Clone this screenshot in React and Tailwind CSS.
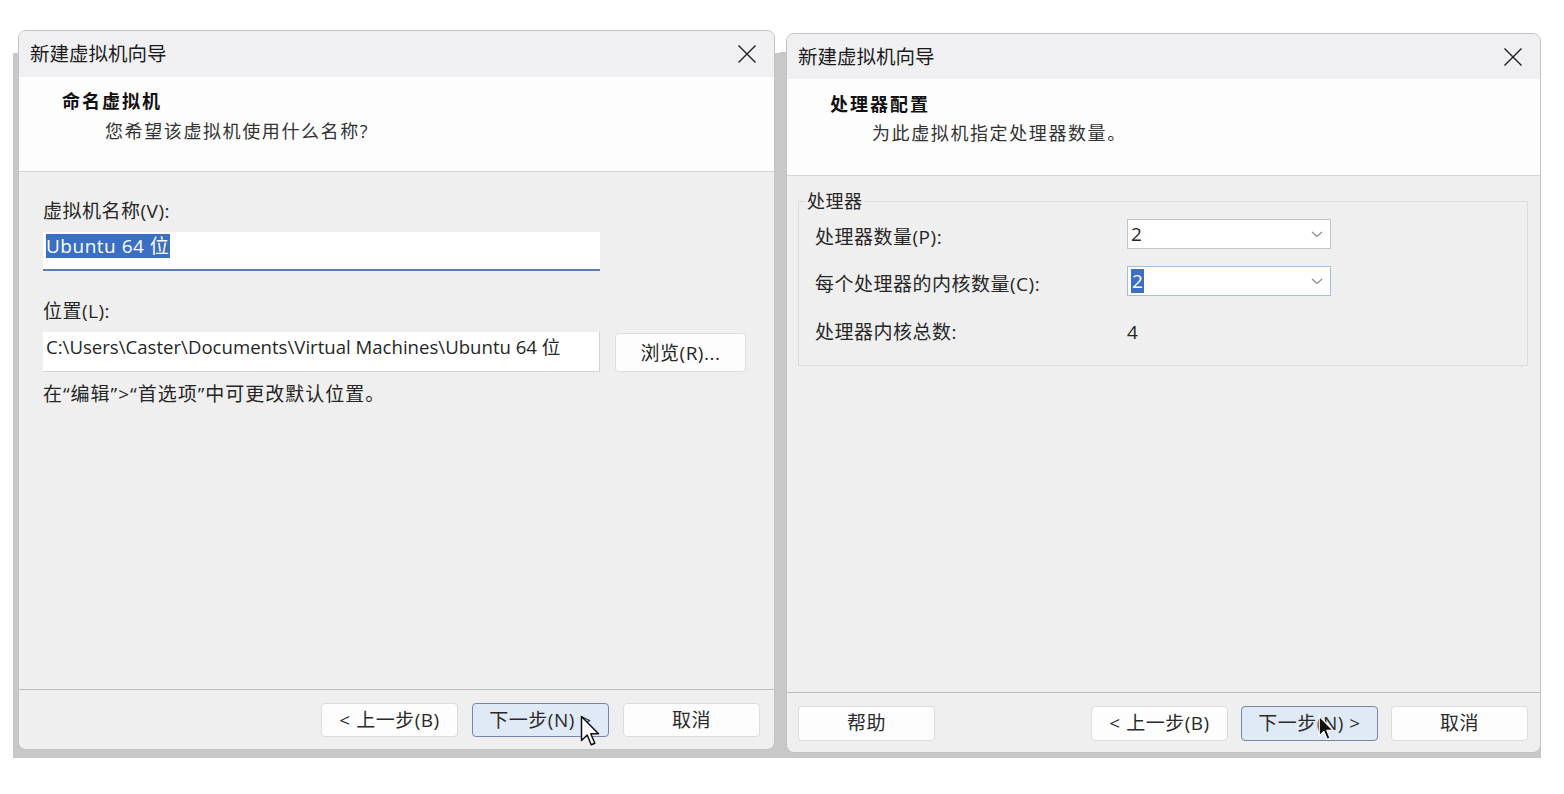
import React from "react";

const CloseIcon = () => (
  <svg width="20" height="20" viewBox="0 0 20 20" className="text-[#1f1f1f]">
    <path d="M1.5 1.5L18.5 18.5M18.5 1.5L1.5 18.5" stroke="currentColor" strokeWidth="1.4" fill="none" />
  </svg>
);

const Chevron = () => (
  <svg width="12" height="7" viewBox="0 0 12 7">
    <path d="M1 1l5 4.5L11 1" stroke="#8c8c8c" strokeWidth="1.2" fill="none" />
  </svg>
);

const Cursor = ({ dark }) => (
  <svg width={dark ? 18 : 22} height={dark ? 29 : 33} viewBox="0 0 22 33">
    <path
      d="M1.5 1.5V25.5L7.2 20L11.2 29.8L14.8 28.3L10.8 18.8H18.5Z"
      fill={dark ? "#111" : "#fff"}
      stroke={dark ? "#fff" : "#111"}
      strokeWidth="1.5"
      strokeLinejoin="round"
    />
  </svg>
);

const Btn = ({ children, next, cursor, dark, tall }) => (
  <button
    className={`relative w-[137px] ${tall ? "h-[35px]" : "h-[34px]"} rounded-[4px] border text-[19px] tracking-[0.5px] text-[#2a2a2a] flex items-center justify-center ${
      next ? "bg-[#e0eaf6] border-[#7489aa]" : "bg-[#fdfdfd] border-[#dddddd]"
    }`}
  >
    {children}
    {cursor && (
      <span className={`absolute ${dark ? "left-[76px] top-[7px]" : "left-[107px] top-[11px]"}`}>
        <Cursor dark={dark} />
      </span>
    )}
  </button>
);

const Wizard = ({ wide, heading, sub, children, footer, right }) => (
  <div
    className={`${wide ? "w-[757px]" : "w-[755px]"} h-[720px] flex flex-col rounded-[8px] border border-[#c3c3c3] bg-[#efefef] overflow-hidden`}
  >
    <div
      className={`${right ? "h-[45px]" : "h-[46px]"} shrink-0 flex items-center justify-between pl-[11px] pr-[17px] bg-[#f0f0f2]`}
    >
      <span className="text-[19.5px] text-[#1c1c1c]">新建虚拟机向导</span>
      <CloseIcon />
    </div>
    <div
      className={`${right ? "h-[97px] pt-[13px]" : "h-[95px] pt-[12px]"} shrink-0 bg-[#fdfdfd] border-b border-[#d4d4d4] pl-[43px]`}
    >
      <div className="text-[18px] leading-[24px] font-bold tracking-[2px] text-[#111]">{heading}</div>
      <div className={`${right ? "mt-[5px] ml-[42px]" : "mt-[6px] ml-[43px]"} text-[18px] leading-[24px] tracking-[1.6px] text-[#333]`}>
        {sub}
      </div>
    </div>
    <div className="flex-1">{children}</div>
    <div className="h-[60px] shrink-0 border-t border-[#bdbdbd] pt-[13px]">{footer}</div>
  </div>
);

const NamePage = () => (
  <div className="pl-[24px] pt-[27px] text-[19px] leading-[24px] tracking-[0.5px] text-[#262626]">
    <div>虚拟机名称(V):</div>
    <div className="mt-[9px] w-[557px] h-[39px] bg-white border-b-2 border-[#5b7db0] pl-[3px] pt-[2px]">
      <span className="inline-block bg-[#3a6fc4] text-white leading-[24px] pr-[1px]">Ubuntu 64 位</span>
    </div>
    <div className="mt-[28px]">位置(L):</div>
    <div className="mt-[9px] flex items-start gap-[15px]">
      <div className="w-[557px] h-[40px] bg-white border-b border-r border-[#d4d4d4] pl-[3px] pt-[3px] text-[18.6px] tracking-normal whitespace-nowrap overflow-hidden">
        C:\Users\Caster\Documents\Virtual Machines\Ubuntu 64 位
      </div>
      <button className="mt-[1px] w-[131px] h-[39px] rounded-[4px] border border-[#dedede] bg-[#fdfdfd] flex items-center justify-center">
        浏览(R)...
      </button>
    </div>
    <div className="mt-[10px] tracking-[1px]">在“编辑”&gt;“首选项”中可更改默认位置。</div>
  </div>
);

const Select = ({ focused, value }) => (
  <div
    className={`w-[204px] h-[30px] bg-white border flex items-center justify-between pl-[3px] pr-[7px] ${
      focused ? "border-[#9ec0e6]" : "border-[#c4c4c4]"
    }`}
  >
    {focused ? <span className="bg-[#3a6fc4] text-white px-[1px] leading-[24px]">{value}</span> : <span>{value}</span>}
    <Chevron />
  </div>
);

const CpuPage = () => (
  <div className="pl-[11px] pt-[13px] pr-[12px] text-[19px] leading-[24px] tracking-[0.5px] text-[#262626]">
    <fieldset className="border border-[#dcdcdc] h-[177px] pl-[16px] pt-[6px]">
      <legend className="-ml-[9px] px-[1px] text-[18px]">处理器</legend>
      <div className="grid grid-cols-[312px_1fr] items-center gap-y-[17px]">
        <div className="mt-[6px]">处理器数量(P):</div>
        <Select value="2" />
        <div className="mt-[6px]">每个处理器的内核数量(C):</div>
        <Select focused value="2" />
        <div className="h-[30px] mt-[4px] flex items-center">处理器内核总数:</div>
        <div className="h-[30px] mt-[4px] flex items-center">4</div>
      </div>
    </fieldset>
  </div>
);

export default function App() {
  return (
    <div className="w-[1564px] h-[794px] bg-white font-['Open_Sans','Noto_Sans_CJK_SC',sans-serif] flex items-start">
      <div className="ml-[13px] mt-[30px] pl-[5px] pr-[5px] pb-[8px] bg-[linear-gradient(to_bottom,#ffffff_23px,#c8c8c8_23px)]">
        <Wizard
          wide
          heading="命名虚拟机"
          sub="您希望该虚拟机使用什么名称?"
          footer={
            <div className="flex justify-end gap-[14px] pr-[14px]">
              <Btn>&lt; 上一步(B)</Btn>
              <Btn next cursor>
                下一步(N) &gt;
              </Btn>
              <Btn>取消</Btn>
            </div>
          }
        >
          <NamePage />
        </Wizard>
      </div>
      <div className="mt-[33px] pl-[6px] pb-[5px] bg-[linear-gradient(to_bottom,#ffffff_19px,#c8c8c8_19px)]">
        <Wizard
          right
          heading="处理器配置"
          sub="为此虚拟机指定处理器数量。"
          footer={
            <div className="flex items-start pl-[11px] pr-[12px]">
              <Btn tall>帮助</Btn>
              <div className="flex-1" />
              <div className="flex gap-[13px]">
                <Btn tall>&lt; 上一步(B)</Btn>
                <Btn tall next cursor dark>
                  下一步(N) &gt;
                </Btn>
                <Btn tall>取消</Btn>
              </div>
            </div>
          }
        >
          <CpuPage />
        </Wizard>
      </div>
    </div>
  );
}
